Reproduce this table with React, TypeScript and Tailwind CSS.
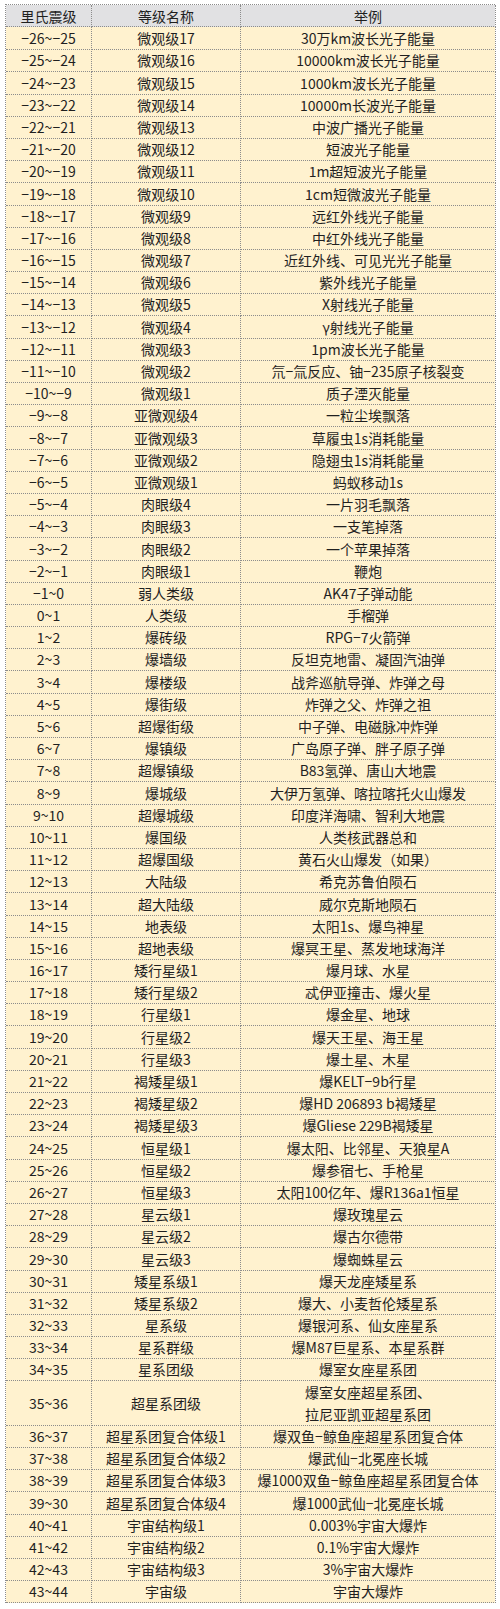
const rows: [string, string, string][] = [
  ['-26~-25', '微观级17', '30万km波长光子能量'],
  ['-25~-24', '微观级16', '10000km波长光子能量'],
  ['-24~-23', '微观级15', '1000km波长光子能量'],
  ['-23~-22', '微观级14', '10000m长波光子能量'],
  ['-22~-21', '微观级13', '中波广播光子能量'],
  ['-21~-20', '微观级12', '短波光子能量'],
  ['-20~-19', '微观级11', '1m超短波光子能量'],
  ['-19~-18', '微观级10', '1cm短微波光子能量'],
  ['-18~-17', '微观级9', '远红外线光子能量'],
  ['-17~-16', '微观级8', '中红外线光子能量'],
  ['-16~-15', '微观级7', '近红外线、可见光光子能量'],
  ['-15~-14', '微观级6', '紫外线光子能量'],
  ['-14~-13', '微观级5', 'X射线光子能量'],
  ['-13~-12', '微观级4', 'γ射线光子能量'],
  ['-12~-11', '微观级3', '1pm波长光子能量'],
  ['-11~-10', '微观级2', '氘-氚反应、铀-235原子核裂变'],
  ['-10~-9', '微观级1', '质子湮灭能量'],
  ['-9~-8', '亚微观级4', '一粒尘埃飘落'],
  ['-8~-7', '亚微观级3', '草履虫1s消耗能量'],
  ['-7~-6', '亚微观级2', '隐翅虫1s消耗能量'],
  ['-6~-5', '亚微观级1', '蚂蚁移动1s'],
  ['-5~-4', '肉眼级4', '一片羽毛飘落'],
  ['-4~-3', '肉眼级3', '一支笔掉落'],
  ['-3~-2', '肉眼级2', '一个苹果掉落'],
  ['-2~-1', '肉眼级1', '鞭炮'],
  ['-1~0', '弱人类级', 'AK47子弹动能'],
  ['0~1', '人类级', '手榴弹'],
  ['1~2', '爆砖级', 'RPG-7火箭弹'],
  ['2~3', '爆墙级', '反坦克地雷、凝固汽油弹'],
  ['3~4', '爆楼级', '战斧巡航导弹、炸弹之母'],
  ['4~5', '爆街级', '炸弹之父、炸弹之祖'],
  ['5~6', '超爆街级', '中子弹、电磁脉冲炸弹'],
  ['6~7', '爆镇级', '广岛原子弹、胖子原子弹'],
  ['7~8', '超爆镇级', 'B83氢弹、唐山大地震'],
  ['8~9', '爆城级', '大伊万氢弹、喀拉喀托火山爆发'],
  ['9~10', '超爆城级', '印度洋海啸、智利大地震'],
  ['10~11', '爆国级', '人类核武器总和'],
  ['11~12', '超爆国级', '黄石火山爆发（如果）'],
  ['12~13', '大陆级', '希克苏鲁伯陨石'],
  ['13~14', '超大陆级', '威尔克斯地陨石'],
  ['14~15', '地表级', '太阳1s、爆鸟神星'],
  ['15~16', '超地表级', '爆冥王星、蒸发地球海洋'],
  ['16~17', '矮行星级1', '爆月球、水星'],
  ['17~18', '矮行星级2', '忒伊亚撞击、爆火星'],
  ['18~19', '行星级1', '爆金星、地球'],
  ['19~20', '行星级2', '爆天王星、海王星'],
  ['20~21', '行星级3', '爆土星、木星'],
  ['21~22', '褐矮星级1', '爆KELT-9b行星'],
  ['22~23', '褐矮星级2', '爆HD 206893 b褐矮星'],
  ['23~24', '褐矮星级3', '爆Gliese 229B褐矮星'],
  ['24~25', '恒星级1', '爆太阳、比邻星、天狼星A'],
  ['25~26', '恒星级2', '爆参宿七、手枪星'],
  ['26~27', '恒星级3', '太阳100亿年、爆R136a1恒星'],
  ['27~28', '星云级1', '爆玫瑰星云'],
  ['28~29', '星云级2', '爆古尔德带'],
  ['29~30', '星云级3', '爆蜘蛛星云'],
  ['30~31', '矮星系级1', '爆天龙座矮星系'],
  ['31~32', '矮星系级2', '爆大、小麦哲伦矮星系'],
  ['32~33', '星系级', '爆银河系、仙女座星系'],
  ['33~34', '星系群级', '爆M87巨星系、本星系群'],
  ['34~35', '星系团级', '爆室女座星系团'],
  ['35~36', '超星系团级', '爆室女座超星系团、\n拉尼亚凯亚超星系团'],
  ['36~37', '超星系团复合体级1', '爆双鱼-鲸鱼座超星系团复合体'],
  ['37~38', '超星系团复合体级2', '爆武仙-北冕座长城'],
  ['38~39', '超星系团复合体级3', '爆1000双鱼-鲸鱼座超星系团复合体'],
  ['39~30', '超星系团复合体级4', '爆1000武仙-北冕座长城'],
  ['40~41', '宇宙结构级1', '0.003%宇宙大爆炸'],
  ['41~42', '宇宙结构级2', '0.1%宇宙大爆炸'],
  ['42~43', '宇宙结构级3', '3%宇宙大爆炸'],
  ['43~44', '宇宙级', '宇宙大爆炸'],
];

const cell = 'flex items-center justify-center text-center border-r border-b border-dotted border-[#8c8c8c]';

// the source font draws hyphens as a wide minus
const dash = (s: string) => s.replace(/-/g, '−');

export default function App() {
  return (
    <div
      className="w-[500px] min-h-[1609px] bg-white pt-[4px] pl-[5px] text-[14px] leading-[20px] text-[#1f1f1f]"
      style={{ fontFamily: '"Noto Sans CJK SC", "Noto Sans", sans-serif' }}
    >
      <div className="w-[490px] border-l border-t border-dotted border-[#8c8c8c]">
        {/* Header */}
        <div className="grid grid-cols-[86px_149px_255px] h-[22.2px] bg-[#e1e1e3]">
          <div className={cell}>里氏震级</div>
          <div className={cell}>等级名称</div>
          <div className={cell}>举例</div>
        </div>
        {rows.map(([mag, name, example]) => {
          const tall = example.includes('\n');
          return (
            <div
              key={mag + name}
              className={`grid grid-cols-[86px_149px_255px] bg-[#fff2cf] ${tall ? 'h-[44.4px]' : 'h-[22.2px]'}`}
            >
              <div className={cell}>{dash(mag)}</div>
              <div className={cell}>{name}</div>
              <div className={`${cell} flex-col leading-[22px]`}>
                {example.split('\n').map((line) => (
                  <span key={line}>{dash(line)}</span>
                ))}
              </div>
            </div>
          );
        })}
      </div>
    </div>
  );
}
